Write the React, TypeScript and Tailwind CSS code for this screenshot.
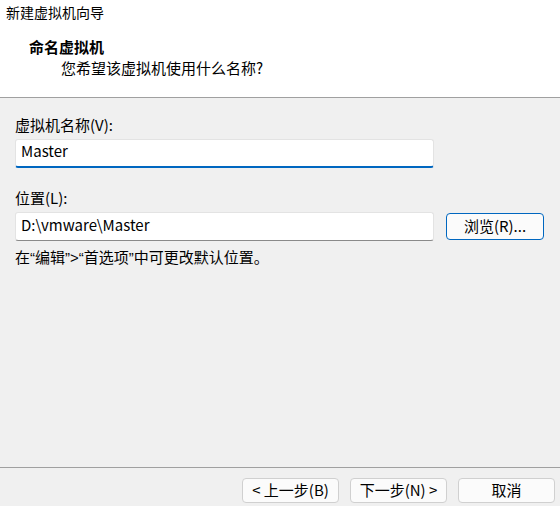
import React from "react";

export default function App() {
  const font = { fontFamily: '"Noto Sans CJK SC", "Noto Sans", sans-serif' };
  const q = "font-['Liberation_Sans',sans-serif]";
  return (
    <div
      className="w-[560px] h-[506px] flex flex-col bg-[#f0f0f0] text-[#000] text-[15px] overflow-hidden"
      style={font}
    >
      <div className="h-[98px] bg-white border-b border-[#a0a0a0] flex flex-col shrink-0">
        <div className="h-[24px] leading-[24px] pl-[6px] text-[14px]">新建虚拟机向导</div>
        <div className="mt-[13px] h-[20px] leading-[20px] pl-[29px] font-bold">命名虚拟机</div>
        <div className="mt-[1px] h-[20px] leading-[20px] pl-[61px]">您希望该虚拟机使用什么名称?</div>
      </div>

      <div className="flex-1 flex flex-col px-[15px] pt-[17px]">
        <div className="h-[20px] leading-[20px]">虚拟机名称(V):</div>
        <div className="mt-[4px] w-[419px] h-[29px] bg-white border border-[#e3e3e3] border-b-2 border-b-[#0067c0] rounded-[3px] pl-[5px] pb-[3px] flex items-center">
          Master
        </div>
        <div className="mt-[20px] h-[20px] leading-[20px]">位置(L):</div>
        <div className="mt-[4px] flex items-center">
          <div className="w-[419px] h-[29px] bg-white border border-[#e3e3e3] border-b-[#8a8a8a] rounded-[3px] pl-[5px] pb-[3px] flex items-center">
            D:\vmware\Master
          </div>
          <div className="ml-[12px] w-[98px] h-[27px] bg-[#fbfbfb] border border-[#0067c0] rounded-[4px] pb-[1px] flex items-center justify-center">
            浏览(R)...
          </div>
        </div>
        <div className="mt-[6px] h-[20px] leading-[20px]">
          在<span className={q}>“</span>编辑<span className={q}>”&gt;“</span>首选项<span className={q}>”</span>中可更改默认位置。
        </div>
      </div>

      <div className="h-[39px] shrink-0 border-t border-[#a0a0a0] flex justify-end items-start pt-[10px] pr-[5px] gap-[11px]">
        <div className="w-[97px] h-[25px] bg-[#fbfbfb] border border-[#d0d0d0] rounded-[4px] pb-[1px] flex items-center justify-center">
          &lt; 上一步(B)
        </div>
        <div className="w-[97px] h-[25px] bg-[#fbfbfb] border border-[#d0d0d0] rounded-[4px] pb-[1px] flex items-center justify-center">
          下一步(N) &gt;
        </div>
        <div className="w-[97px] h-[25px] bg-[#fbfbfb] border border-[#d0d0d0] rounded-[4px] pb-[1px] flex items-center justify-center">
          取消
        </div>
      </div>
    </div>
  );
}
